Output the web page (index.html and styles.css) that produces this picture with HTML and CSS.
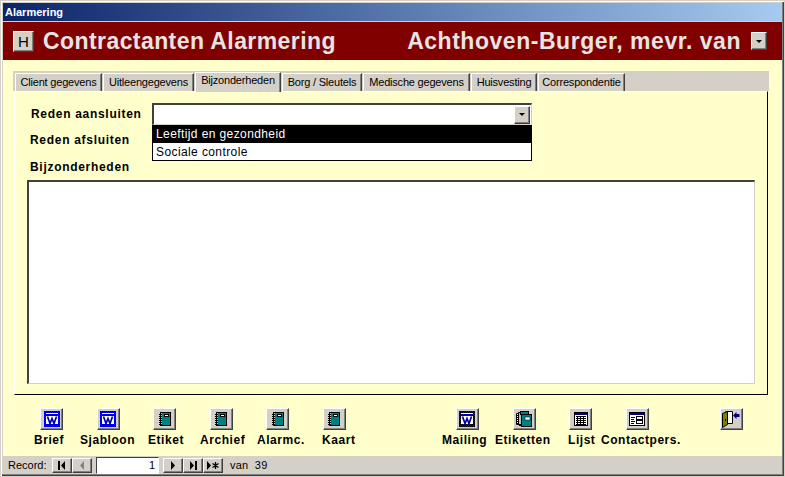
FILE: index.html
```html
<!DOCTYPE html>
<html lang="nl">
<head>
<meta charset="utf-8">
<title>Alarmering</title>
<link rel="stylesheet" href="styles.css">
</head>
<body>
<svg class="defs" width="0" height="0" aria-hidden="true">
  <defs>
    <pattern id="dither" width="2" height="2" patternUnits="userSpaceOnUse">
      <rect width="2" height="2" fill="#0000ff"/>
      <rect width="1" height="1" fill="#000000"/>
      <rect x="1" y="1" width="1" height="1" fill="#000000"/>
    </pattern>
    <symbol id="i-word" viewBox="0 0 16 16">
      <rect width="16" height="16" fill="url(#dither)"/>
      <rect x="2" y="2" width="12" height="1" fill="#ffffff"/>
      <rect x="2" y="3" width="12" height="2" fill="#0000c0"/>
      <rect x="2" y="5" width="12" height="8" fill="#ffffff"/>
      <path d="M3.500 5.500l2.500 7 2-5 2 5 2.500-7" fill="none" stroke="#0000a8" stroke-width="1.700"/>
    </symbol>
    <symbol id="i-book" viewBox="0 0 16 16">
      <rect x="3" y="1" width="11" height="14" fill="#000000"/>
      <rect x="4" y="2" width="9" height="12" fill="#008080"/>
      <rect x="4" y="2" width="1" height="12" fill="#c0c0c0"/>
      <rect x="7" y="3" width="5" height="3" fill="#000000"/>
      <rect x="8" y="4" width="3" height="1" fill="#ffffff"/>
      <path d="M2 3.500h3M2 5.500h3M2 7.500h3M2 9.500h3M2 11.500h3M2 13.500h3" stroke="#000000" stroke-width="1"/>
    </symbol>
    <symbol id="i-books" viewBox="0 0 18 18">
      <path d="M1.500 3.500h9v11h-9z" fill="#ffffff" stroke="#000000"/>
      <path d="M3.500 2.500h9v12h-9z" fill="#c0c0c0" stroke="#000000"/>
      <rect x="5.500" y="1.500" width="8" height="3" fill="#008080" stroke="#000000"/>
      <rect x="6.500" y="4.500" width="10" height="12" fill="#008080" stroke="#000000"/>
      <rect x="10" y="7" width="5" height="3" fill="#ffffff" stroke="#000000" stroke-width="0.500"/>
      <path d="M1 5.500h3M1 7.500h3M1 9.500h3M1 11.500h3M1 13.500h3M4 15.500h3" stroke="#000000"/>
    </symbol>
    <symbol id="i-list" viewBox="0 0 16 16">
      <rect x="1.500" y="1.500" width="13" height="13" fill="#ffffff" stroke="#000000"/>
      <rect x="2" y="2" width="12" height="2" fill="#000080"/>
      <path d="M3 5.500h10M3 7.500h10M3 9.500h10M3 11.500h10M3 13.500h10M4.500 5v8M7.500 5v8M10.500 5v8" stroke="#000000"/>
    </symbol>
    <symbol id="i-form" viewBox="0 0 16 16">
      <rect x="0.500" y="1.500" width="15" height="13" fill="#ffffff" stroke="#000000"/>
      <rect x="1" y="2" width="14" height="2" fill="#000080"/>
      <path d="M2 6.500h4M2 8.500h3M2 10.500h4M2 12.500h3" stroke="#000000"/>
      <rect x="7.500" y="5.500" width="6" height="3" fill="#ffffff" stroke="#000000"/>
      <rect x="7.500" y="9.500" width="6" height="3" fill="#ffffff" stroke="#000000"/>
    </symbol>
    <symbol id="i-exit" viewBox="0 0 18 18">
      <path d="M3.500 1.500h7v12h-7" fill="#ffffff" stroke="#000000"/>
      <path d="M0.500 3.500l5-2v13l-5 3z" fill="#808000" stroke="#000000"/>
      <rect x="3" y="9" width="1" height="2" fill="#000000"/>
      <path d="M11 5.500l3.500-3.500v2h3v3h-3v2z" fill="#000080"/>
    </symbol>
  </defs>
</svg>

<div class="window">
  <div class="titlebar">Alarmering</div>

  <header class="banner">
    <button class="btn btn-h" type="button">H</button>
    <h1 class="banner-title">Contractanten Alarmering</h1>
    <h2 class="banner-name">Achthoven-Burger, mevr. van</h2>
    <button class="btn btn-small" type="button"><span class="arrow-down"></span></button>
  </header>

  <main class="content">
    <div class="tabstrip">
      <span class="tab tab-1">Client gegevens</span>
      <span class="tab tab-2">Uitleengegevens</span>
      <span class="tab tab-3 is-active">Bijzonderheden</span>
      <span class="tab tab-4">Borg / Sleutels</span>
      <span class="tab tab-5">Medische gegevens</span>
      <span class="tab tab-6">Huisvesting</span>
      <span class="tab tab-7">Correspondentie</span>
    </div>

    <section class="panel">
      <div class="row row-combo">
        <label class="field-label">Reden aansluiten</label>
        <div class="combo">
          <span class="btn combo-btn"><span class="arrow-down"></span></span>
          <ul class="dropdown">
            <li class="option is-selected">Leeftijd en gezondheid</li>
            <li class="option">Sociale controle</li>
          </ul>
        </div>
      </div>
      <div class="row row-close"><label class="field-label">Reden afsluiten</label></div>
      <div class="row row-notes"><label class="field-label">Bijzonderheden</label></div>
      <div class="memo"></div>
    </section>

    <div class="tool-buttons">
      <div class="tool-group">
        <button class="btn tool" type="button"><svg class="ico"><use href="#i-word"/></svg></button>
        <button class="btn tool" type="button"><svg class="ico"><use href="#i-word"/></svg></button>
        <button class="btn tool" type="button"><svg class="ico"><use href="#i-book"/></svg></button>
        <button class="btn tool" type="button"><svg class="ico"><use href="#i-book"/></svg></button>
        <button class="btn tool" type="button"><svg class="ico"><use href="#i-book"/></svg></button>
        <button class="btn tool" type="button"><svg class="ico"><use href="#i-book"/></svg></button>
      </div>
      <div class="tool-group tool-group-2">
        <button class="btn tool" type="button"><svg class="ico"><use href="#i-word"/></svg></button>
        <button class="btn tool" type="button"><svg class="ico ico-18"><use href="#i-books"/></svg></button>
        <button class="btn tool" type="button"><svg class="ico"><use href="#i-list"/></svg></button>
        <button class="btn tool" type="button"><svg class="ico"><use href="#i-form"/></svg></button>
      </div>
      <button class="btn tool tool-exit" type="button"><svg class="ico ico-18"><use href="#i-exit"/></svg></button>
    </div>

    <div class="tool-labels">
      <span>Brief</span>
      <span>Sjabloon</span>
      <span>Etiket</span>
      <span>Archief</span>
      <span>Alarmc.</span>
      <span>Kaart</span>
      <span>Mailing</span>
      <span>Etiketten</span>
      <span>Lijst</span>
      <span>Contactpers.</span>
    </div>
  </main>

  <footer class="recordbar">
    <span class="rec-label">Record:</span>
    <div class="nav-group">
      <span class="btn nav"><svg class="nav-ico" viewBox="0 0 10 9"><path d="M1 0h2v9H1zM8 0v9L4 4.500z"/></svg></span>
      <span class="btn nav is-disabled"><svg class="nav-ico" viewBox="0 0 10 9"><path d="M7 0v9L3 4.500z" fill="#808080"/></svg></span>
    </div>
    <div class="rec-input">1</div>
    <div class="nav-group">
      <span class="btn nav"><svg class="nav-ico" viewBox="0 0 10 9"><path d="M3 0v9l4-4.500z"/></svg></span>
      <span class="btn nav"><svg class="nav-ico" viewBox="0 0 10 9"><path d="M2 0v9l4-4.500zM7 0h2v9H7z"/></svg></span>
      <span class="btn nav"><svg class="nav-ico nav-ico-wide" viewBox="0 0 14 9"><path d="M1 0v9l4-4.500z"/><path d="M9.500 1v7M6.500 2.500l6 4M12.500 2.500l-6 4" stroke="#000" stroke-width="1.300"/></svg></span>
    </div>
    <span class="rec-total">van&nbsp; 39</span>
  </footer>
</div>
</body>
</html>
```

FILE: styles.css
```css
* { box-sizing: border-box; }

html, body {
  margin: 0;
  padding: 0;
  background: #d4d0c8;
}

.defs { position: absolute; }

.window {
  width: 785px;
  height: 477px;
  display: flex;
  flex-direction: column;
  padding: 3px;
  background: #d4d0c8;
  box-shadow: inset 1px 1px 0 #d4d0c8, inset -1px -1px 0 #d4d0c8, inset 2px 2px 0 #ffffff, inset -2px -2px 0 #404040, inset -3px -3px 0 #808080;
  font-family: "Liberation Sans", Arial, sans-serif;
  color: #000;
}

.titlebar {
  height: 18px;
  flex: none;
  padding-left: 2px;
  background: linear-gradient(90deg, #0a246a, #a6caf0);
  color: #fff;
  font-size: 11px;
  font-weight: bold;
  line-height: 18px;
}

.banner {
  flex: none;
  height: 38px;
  margin-top: 1px;
  display: flex;
  align-items: center;
  padding: 0 15px 0 10px;
  background: #800000;
  color: #e8e4e4;
}

.banner-title, .banner-name {
  margin: 0;
  font-size: 23px;
  font-weight: bold;
  letter-spacing: 0.42px;
  line-height: 38px;
  white-space: nowrap;
}

.banner-title { margin-left: 9px; }
.banner-name { margin-left: auto; margin-right: 10px; letter-spacing: 0.53px; }

.btn {
  display: flex;
  align-items: center;
  justify-content: center;
  padding: 0;
  background: #d4d0c8;
  border: 1px solid;
  border-color: #fff #404040 #404040 #fff;
  box-shadow: inset -1px -1px 0 #808080;
  font-family: inherit;
  color: #000;
}

.btn-h {
  width: 21px;
  height: 21px;
  font-size: 15px;
  font-weight: normal;
}

.btn-small {
  width: 16px;
  height: 18px;
}

.arrow-down {
  width: 0;
  height: 0;
  border-left: 3px solid transparent;
  border-right: 3px solid transparent;
  border-top: 3px solid #000;
}

.content {
  flex: 1;
  display: flex;
  flex-direction: column;
  padding: 11px 13px 0 10px;
  background: #ffffcc;
}

.tabstrip {
  flex: none;
  height: 20px;
  display: flex;
  align-items: flex-end;
  padding-left: 2px;
  background: #d4d0c8;
}

.tab {
  height: 18px;
  display: flex;
  align-items: center;
  justify-content: center;
  background: #d4d0c8;
  border: 1px solid;
  border-color: #fff #404040 transparent #fff;
  border-bottom: 0;
  box-shadow: inset -1px 0 0 #808080;
  font-size: 11px;
  letter-spacing: -0.2px;
  white-space: nowrap;
  margin-right: 1px;
  padding-bottom: 1px;
}

.tab-1 { width: 87px; }
.tab-2 { width: 91px; }
.tab-3 { width: 86px; height: 20px; margin-right: 1px; padding-bottom: 6px; position: relative; top: 1px; }
.tab-4 { width: 80px; }
.tab-5 { width: 107px; }
.tab-6 { width: 66px; }
.tab-7 { width: 87px; }

.panel {
  flex: none;
  height: 304px;
  margin-left: 1px;
  margin-right: 1px;
  padding: 11px 12px 0 12px;
  display: flex;
  flex-direction: column;
  background: #ffffcc;
  border: 1px solid;
  border-color: #fff #000 #000 #fff;
}

.row { display: flex; align-items: center; flex: none; }
.row-combo { height: 22px; margin-left: 4px; }
.row-close { height: 18px; margin-top: 6px; margin-left: 3px; }
.row-notes { height: 18px; margin-top: 9px; margin-left: 3px; }

.field-label {
  font-size: 12px;
  font-weight: bold;
  letter-spacing: 0.7px;
  white-space: nowrap;
}

.combo {
  position: absolute;
  left: 152px;
  top: 103px;
  width: 380px;
  height: 22px;
  display: flex;
  justify-content: flex-end;
  align-items: center;
  padding-right: 1px;
  background: #fff;
  border: 2px solid;
  border-color: #404040 #d4d0c8 #d4d0c8 #404040;
  border-width: 2px 1px 1px 2px;
}

.combo-btn { width: 16px; height: 18px; }

.dropdown {
  position: absolute;
  left: -2px;
  top: 20px;
  width: 380px;
  height: 36px;
  margin: 0;
  padding: 0;
  list-style: none;
  background: #fff;
  border: 1px solid #000;
  border-top: 0;
}

.option {
  height: 17.500px;
  padding-left: 3px;
  font-size: 12px;
  letter-spacing: 0.4px;
  line-height: 19px;
}

.option.is-selected { background: #000; color: #fff; }

.memo {
  flex: none;
  height: 204px;
  margin-top: 4px;
  background: #fff;
  border: 2px solid;
  border-color: #404040 #d4d0c8 #d4d0c8 #404040;
  border-width: 2px 1px 1px 2px;
}

.tool-buttons {
  flex: none;
  display: flex;
  margin-top: 13px;
  padding-left: 27px;
}

.tool-group { display: flex; gap: 33.600px; }
.tool-group-2 { margin-left: 110px; }
.tool-exit { margin-left: 71px; }

.tool {
  width: 23px;
  height: 22px;
  flex: none;
}

.ico { width: 16px; height: 16px; display: block; }
.ico-18 { width: 18px; height: 18px; }

.tool-labels {
  flex: none;
  display: grid;
  grid-template-columns: 46px 68px 52px 57px 65px 120px 53px 73px 33px auto;
  margin-top: 2px;
  padding-left: 21px;
  font-size: 12px;
  font-weight: bold;
  letter-spacing: 0.55px;
  line-height: 16px;
  white-space: nowrap;
}

.recordbar {
  flex: none;
  height: 18px;
  display: flex;
  align-items: center;
  padding-left: 5px;
  font-size: 11px;
  letter-spacing: 0;
}

.rec-label { width: 44px; }

.nav-group { display: flex; }
.nav { width: 20px; height: 15px; }
.nav-ico { width: 10px; height: 9px; display: block; }
.nav-ico-wide { width: 14px; }

.rec-input {
  width: 63px;
  height: 17px;
  margin: 0 4px;
  padding-right: 3px;
  text-align: right;
  background: #fff;
  border: 1px solid;
  border-color: #404040 #fff #fff #404040;
  line-height: 15px;
  font-size: 11px;
}

.rec-total { margin-left: 7px; letter-spacing: 0.2px; }
```
